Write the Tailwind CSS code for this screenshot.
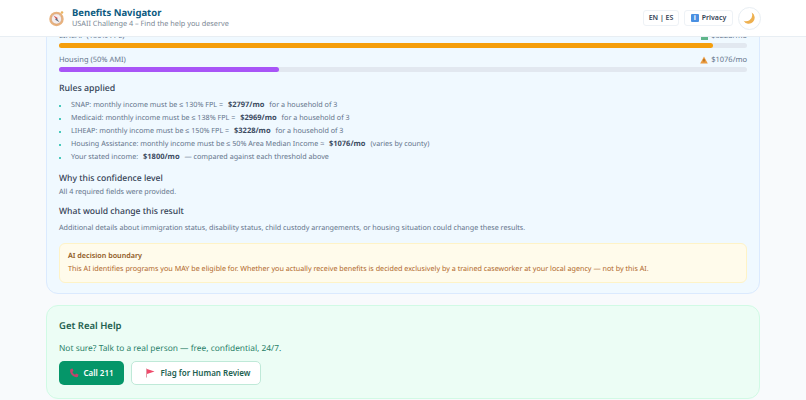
<!DOCTYPE html>
<html lang="en">
<head>
    <meta charset="UTF-8">
    <title>Benefits Navigator</title>
    <script src="https://cdn.jsdelivr.net/npm/@tailwindcss/browser@4"></script>
</head>
<body class="h-[400px] overflow-hidden bg-[#f8fafc] font-['Noto_Sans',sans-serif] [text-rendering:geometricPrecision]">

    <!-- Header -->
    <header class="relative z-10 h-[37px] bg-white border-b border-[#e8eef3] flex items-center justify-between pl-[48px] pr-[45px]">
        <div class="flex items-center gap-[7px]">
            <svg class="w-[17px] h-[17px]" viewBox="0 0 20 20">
                <circle cx="10" cy="10.500" r="8.500" fill="#e8b27e"/>
                <circle cx="10" cy="10.500" r="6" fill="#f3eef0" stroke="#c98a5c" stroke-width="0.500"/>
                <path d="M6.500 6.500 L11.500 9.500 L10 11.500 Z" fill="#d9534f"/>
                <path d="M13.500 14.500 L8.500 11.500 L10 9.500 Z" fill="#5f6b7a"/>
                <circle cx="16.500" cy="3" r="1.500" fill="#eab35e"/>
            </svg>
            <div>
                <h1 class="text-[9.500px] leading-[13px] font-bold text-[#0c5a80]">Benefits Navigator</h1>
                <p class="text-[7.300px] leading-[11px] text-[#7b8794]">USAII Challenge 4 – Find the help you deserve</p>
            </div>
        </div>
        <div class="flex items-center gap-[5px]">
            <button class="h-[16px] w-[36px] rounded-[3px] bg-white border border-[#eef2f6] text-[7px] font-semibold text-[#334155]">EN | ES</button>
            <button class="h-[16px] w-[49px] rounded-[3px] bg-white border border-[#eef2f6] text-[7px] font-semibold text-[#334155] flex items-center justify-center gap-[3px]">
                <span class="w-[8px] h-[8px] rounded-[1px] bg-[#4a90e2] text-white text-[7px] leading-[8px] text-center font-bold">i</span>
                Privacy
            </button>
            <button class="w-[23px] h-[23px] rounded-full bg-white border border-[#e8eef3] flex items-center justify-center">
                <svg class="w-[13px] h-[13px]" viewBox="0 0 12 12"><path d="M8 .500 A5.500 5.500 0 1 1 .500 8 A6 6 0 0 0 6 7.500 A6 6 0 0 0 8 .500 Z" fill="#eeb04f"/></svg>
            </button>
        </div>
    </header>

    <main class="-mt-[9px] flex flex-col gap-[11px] mx-[46px]">

        <!-- Details card -->
        <section class="h-[266px] bg-[#f0f9ff] border border-[#dbeafe] rounded-b-[12px] px-[12px]">
            <div class="flex flex-col gap-[5px]">
                <div>
                    <div class="flex justify-between text-[7.500px] leading-[14px] text-[#64748b]">
                        <span>LIHEAP (150% FPL)</span>
                        <span class="flex items-center gap-[3px]"><span class="w-[7px] h-[7px] bg-[#5fb58a]"></span>$3228/mo</span>
                    </div>
                    <div class="h-[5px] rounded-full bg-[#e2e8f0]"><div class="h-full rounded-full bg-[#f59e0b]" style="width: 95%"></div></div>
                </div>
                <div>
                    <div class="flex justify-between text-[7.500px] leading-[14px] text-[#64748b]">
                        <span>Housing (50% AMI)</span>
                        <span class="flex items-center gap-[3px]">
                            <svg class="w-[8px] h-[8px]" viewBox="0 0 8 8"><path d="M4 .500 L7.800 7.500 H.200 Z" fill="#ea9a3e"/><rect x="3.600" y="3" width=".800" height="2.500" fill="#7a4a10"/></svg>
                            $1076/mo
                        </span>
                    </div>
                    <div class="h-[5px] rounded-full bg-[#e2e8f0]"><div class="h-full rounded-full bg-[#a855f7]" style="width: 32%"></div></div>
                </div>
            </div>

            <h3 class="mt-[9px] text-[8.800px] leading-[14px] font-medium text-[#334155]">Rules applied</h3>
            <ul class="mt-[4px] text-[7.200px] leading-[13px] text-[#64748b]">
                <li class="flex items-center"><span class="w-[2px] h-[2px] mr-[10px] rounded-full bg-[#14b8a6]"></span>SNAP: monthly income must be ≤ 130% FPL =&nbsp;<b class="mx-[3px] text-[7.500px] font-bold text-[#3c4b5f]">$2797/mo</b>&nbsp;for a household of 3</li>
                <li class="flex items-center"><span class="w-[2px] h-[2px] mr-[10px] rounded-full bg-[#14b8a6]"></span>Medicaid: monthly income must be ≤ 138% FPL =&nbsp;<b class="mx-[3px] text-[7.500px] font-bold text-[#3c4b5f]">$2969/mo</b>&nbsp;for a household of 3</li>
                <li class="flex items-center"><span class="w-[2px] h-[2px] mr-[10px] rounded-full bg-[#14b8a6]"></span>LIHEAP: monthly income must be ≤ 150% FPL =&nbsp;<b class="mx-[3px] text-[7.500px] font-bold text-[#3c4b5f]">$3228/mo</b>&nbsp;for a household of 3</li>
                <li class="flex items-center"><span class="w-[2px] h-[2px] mr-[10px] rounded-full bg-[#14b8a6]"></span>Housing Assistance: monthly income must be ≤ 50% Area Median Income ≈&nbsp;<b class="mx-[3px] text-[7.500px] font-bold text-[#3c4b5f]">$1076/mo</b>&nbsp;(varies by county)</li>
                <li class="flex items-center"><span class="w-[2px] h-[2px] mr-[10px] rounded-full bg-[#14b8a6]"></span>Your stated income:&nbsp;<b class="mx-[3px] text-[7.500px] font-bold text-[#3c4b5f]">$1800/mo</b>&nbsp;— compared against each threshold above</li>
            </ul>

            <h3 class="mt-[7px] text-[8.600px] leading-[14px] font-medium text-[#334155]">Why this confidence level</h3>
            <p class="mt-[1px] text-[7.200px] leading-[13px] text-[#64748b]">All 4 required fields were provided.</p>

            <h3 class="mt-[5px] text-[8.600px] leading-[14px] font-medium text-[#334155]">What would change this result</h3>
            <p class="mt-[4px] text-[7.200px] leading-[13px] text-[#64748b]">Additional details about immigration status, disability status, child custody arrangements, or housing situation could change these results.</p>

            <div class="mt-[8px] h-[40px] rounded-[6px] bg-[#fffbeb] border border-[#fef3c7] px-[8px] py-[6px]">
                <p class="text-[7.200px] leading-[13px] font-semibold text-[#8f5a24]">AI decision boundary</p>
                <p class="text-[7.200px] leading-[13px] text-[#b0672a]">This AI identifies programs you MAY be eligible for. Whether you actually receive benefits is decided exclusively by a trained caseworker at your local agency — not by this AI.</p>
            </div>
        </section>

        <!-- Get Real Help -->
        <section class="h-[94px] bg-[#ecfdf5] border border-[#d1fae5] rounded-[12px] px-[12px] pt-[12px]">
            <h2 class="text-[9.500px] leading-[16px] font-semibold text-[#22604f]">Get Real Help</h2>
            <p class="mt-[8px] text-[8.400px] leading-[14px] text-[#2a7f68]">Not sure? Talk to a real person — free, confidential, 24/7.</p>
            <div class="mt-[5px] flex gap-[7px]">
                <button class="h-[24px] w-[65px] rounded-[5px] bg-[#059669] text-white text-[8px] font-semibold flex items-center justify-center gap-[4px]">
                    <svg class="w-[10px] h-[10px]" viewBox="0 0 10 10"><path d="M1.500 1 L3.500 .500 L4.500 3 L3.300 3.900 Q4.300 6 6.100 6.700 L7 5.500 L9.500 6.500 L9 8.500 Q8 9.800 5 8.500 Q1.500 6.500 1 3 Z" fill="#c2446c"/></svg>
                    Call 211
                </button>
                <button class="h-[24px] w-[130px] pl-[3px] rounded-[5px] bg-white border border-[#bfe9d8] text-[#22604f] text-[8px] font-semibold flex items-center justify-center gap-[6px]">
                    <svg class="w-[10px] h-[10px]" viewBox="0 0 10 10"><path d="M1.500 .500 V9.500" stroke="#d9808f" stroke-width=".800"/><path d="M2 1 L9.500 3.500 L2 6 Z" fill="#ef4a6b"/></svg>
                    Flag for Human Review
                </button>
            </div>
        </section>
    </main>
</body>
</html>
